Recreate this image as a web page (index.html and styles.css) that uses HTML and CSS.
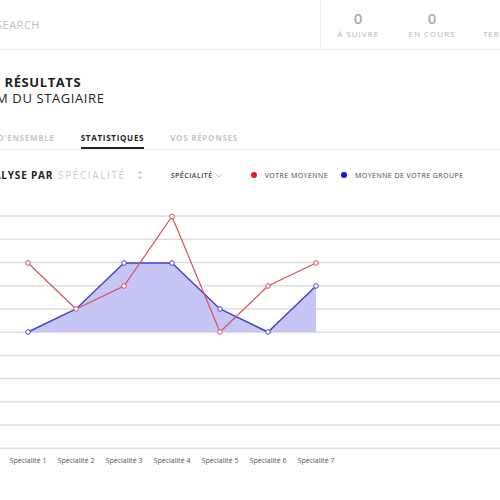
FILE: index.html
```html
<!DOCTYPE html>
<html lang="fr">
<head>
<meta charset="utf-8">
<title>Résultats</title>
<link rel="stylesheet" href="styles.css">
</head>
<body>
<div class="page">
  <header class="topbar">
    <div class="search">SEARCH</div>
    <div class="stats">
      <div class="stat"><span class="num">0</span><span class="lbl">À SUIVRE</span></div>
      <div class="stat"><span class="num">0</span><span class="lbl">EN COURS</span></div>
      <div class="stat"><span class="num">0</span><span class="lbl">TERMINÉS</span></div>
    </div>
  </header>

  <section class="title">
    <h1>MES RÉSULTATS</h1>
    <h2>NOM DU STAGIAIRE</h2>
  </section>

  <nav class="tabs">
    <span class="tab">VUE D'ENSEMBLE</span>
    <span class="tab active">STATISTIQUES</span>
    <span class="tab">VOS RÉPONSES</span>
  </nav>

  <div class="filters">
    <span class="analyse">ANALYSE PAR</span>
    <span class="by">SPÉCIALITÉ</span>
    <svg class="sort" width="6" height="10" viewBox="0 0 6 10"><path d="M3 0.5 L5.5 3.5 H0.5 Z M3 9.5 L5.5 6.5 H0.5 Z" fill="#c9cfd3"/></svg>
    <span class="select">SPÉCIALITÉ
      <svg class="chev" width="8" height="5" viewBox="0 0 8 5"><path d="M0.5 0.5 L4 4 L7.5 0.5" fill="none" stroke="#c3c9cd" stroke-width="1"/></svg>
    </span>
    <span class="legend"><i class="dot red"></i>VOTRE MOYENNE</span>
    <span class="legend"><i class="dot blue"></i>MOYENNE DE VOTRE GROUPE</span>
  </div>

  <div class="chart">
    <svg class="plot" width="554" height="255" viewBox="-54 200 554 255">
      <g stroke="#dedede" stroke-width="1.5">
        <line x1="-54" x2="500" y1="217" y2="217"/>
        <line x1="-54" x2="500" y1="240.2" y2="240.2"/>
        <line x1="-54" x2="500" y1="263.6" y2="263.6"/>
        <line x1="-54" x2="500" y1="286.8" y2="286.8"/>
        <line x1="-54" x2="500" y1="310" y2="310"/>
        <line x1="-54" x2="500" y1="333.2" y2="333.2"/>
        <line x1="-54" x2="500" y1="356.4" y2="356.4"/>
        <line x1="-54" x2="500" y1="379.6" y2="379.6"/>
        <line x1="-54" x2="500" y1="402.8" y2="402.8"/>
        <line x1="-54" x2="500" y1="426" y2="426"/>
        <line x1="-54" x2="500" y1="449.2" y2="449.2"/>
      </g>
      <polygon points="28,333 76,310 124,264 172,264 220,310 268,333 316,287 316,333" fill="#c6c6f6"/>
      <polyline points="28,333 76,310 124,264 172,264 220,310 268,333 316,287" fill="none" stroke="#4646c8" stroke-width="1.5"/>
      <polyline points="28,264 76,310 124,287 172,217.5 220,333 268,287 316,264" fill="none" stroke="#d8505c" stroke-width="1.2"/>
      <g fill="#fff" stroke="#d8505c" stroke-width="1">
        <circle cx="28" cy="264" r="2.3"/>
        <circle cx="76" cy="310" r="2.3"/>
        <circle cx="124" cy="287" r="2.3"/>
        <circle cx="172" cy="217.5" r="2.3"/>
        <circle cx="220" cy="333" r="2.3"/>
        <circle cx="268" cy="287" r="2.3"/>
        <circle cx="316" cy="264" r="2.3"/>
      </g>
      <g fill="#fff" stroke="#4646c8" stroke-width="1">
        <circle cx="28" cy="333" r="2.3"/>
        <circle cx="124" cy="264" r="2.3"/>
        <circle cx="172" cy="264" r="2.3"/>
        <circle cx="220" cy="310" r="2.3"/>
        <circle cx="268" cy="333" r="2.3"/>
        <circle cx="316" cy="287" r="2.3"/>
      </g>
    </svg>
    <div class="xlabels">
      <span>Spécialité 1</span>
      <span>Spécialité 2</span>
      <span>Spécialité 3</span>
      <span>Spécialité 4</span>
      <span>Spécialité 5</span>
      <span>Spécialité 6</span>
      <span>Spécialité 7</span>
    </div>
  </div>
</div>
</body>
</html>
```
FILE: styles.css
```css
html, body {
  margin: 0;
  padding: 0;
  background: #fff;
  overflow: hidden;
}
body {
  font-family: "Open Sans", "DejaVu Sans", sans-serif;
  color: #222;
}
.page {
  width: 588px;
  margin-left: -54px;
}
.topbar {
  display: flex;
  height: 49px;
  border-bottom: 1px solid #ececec;
}
.search {
  flex: 0 0 374px;
  box-sizing: border-box;
  padding-left: 50px;
  display: flex;
  align-items: center;
  font-size: 11px;
  letter-spacing: 0.5px;
  color: #b9c2c6;
}
.stats {
  display: flex;
  border-left: 1px solid #efefef;
}
.stat {
  width: 74px;
  display: flex;
  flex-direction: column;
  align-items: center;
  padding-top: 10px;
}
.num {
  font-size: 15px;
  line-height: 17px;
  font-weight: 600;
  color: #a3adb2;
}
.lbl {
  margin-top: 1px;
  font-size: 8px;
  line-height: 11px;
  letter-spacing: 1px;
  color: #adb6bb;
}
.title {
  padding: 24px 0 0 26px;
}
.title h1 {
  margin: 0;
  font-size: 13px;
  line-height: 16px;
  font-weight: 700;
  letter-spacing: 0.6px;
  color: #1e1e1e;
}
.title h2 {
  margin: 0 0 0 3px;
  font-size: 13px;
  line-height: 16px;
  font-weight: 400;
  letter-spacing: 0.6px;
  color: #222;
}
.tabs {
  display: flex;
  gap: 26px;
  margin-top: 26px;
  padding-left: 31px;
  border-bottom: 1px solid #ededed;
}
.tab {
  font-size: 8px;
  line-height: 12px;
  font-weight: 700;
  letter-spacing: 0.72px;
  color: #c3c9cd;
  padding-bottom: 3px;
  border-bottom: 2px solid transparent;
}
.tab.active {
  color: #222;
  border-bottom-color: #222;
}
.filters {
  display: flex;
  align-items: center;
  height: 24px;
  margin-top: 13px;
  padding-left: 31px;
}
.analyse {
  font-size: 10px;
  font-weight: 700;
  letter-spacing: 0.8px;
  color: #222;
}
.by {
  margin-left: 5px;
  font-size: 10px;
  letter-spacing: 1.6px;
  color: #c7cdd1;
}
.sort {
  margin-left: 11px;
}
.select {
  margin-left: 28px;
  display: flex;
  align-items: center;
  gap: 2px;
  font-size: 7px;
  font-weight: 600;
  letter-spacing: 0.5px;
  color: #444;
}
.legend {
  display: flex;
  align-items: center;
  font-size: 7px;
  letter-spacing: 0.45px;
  color: #444;
  margin-left: 28px;
}
.legend + .legend {
  margin-left: 13px;
}
.dot {
  width: 6px;
  height: 6px;
  border-radius: 50%;
  margin-right: 8px;
}
.dot.red { background: #ec1a1a; }
.dot.blue { background: #1414e6; }
.chart {
  margin-top: 12px;
}
.plot {
  display: block;
}
.xlabels {
  display: flex;
  padding-left: 58px;
  margin-top: 1px;
}
.xlabels span {
  width: 48px;
  text-align: center;
  font-size: 7px;
  line-height: 12px;
  color: #555;
}
```
